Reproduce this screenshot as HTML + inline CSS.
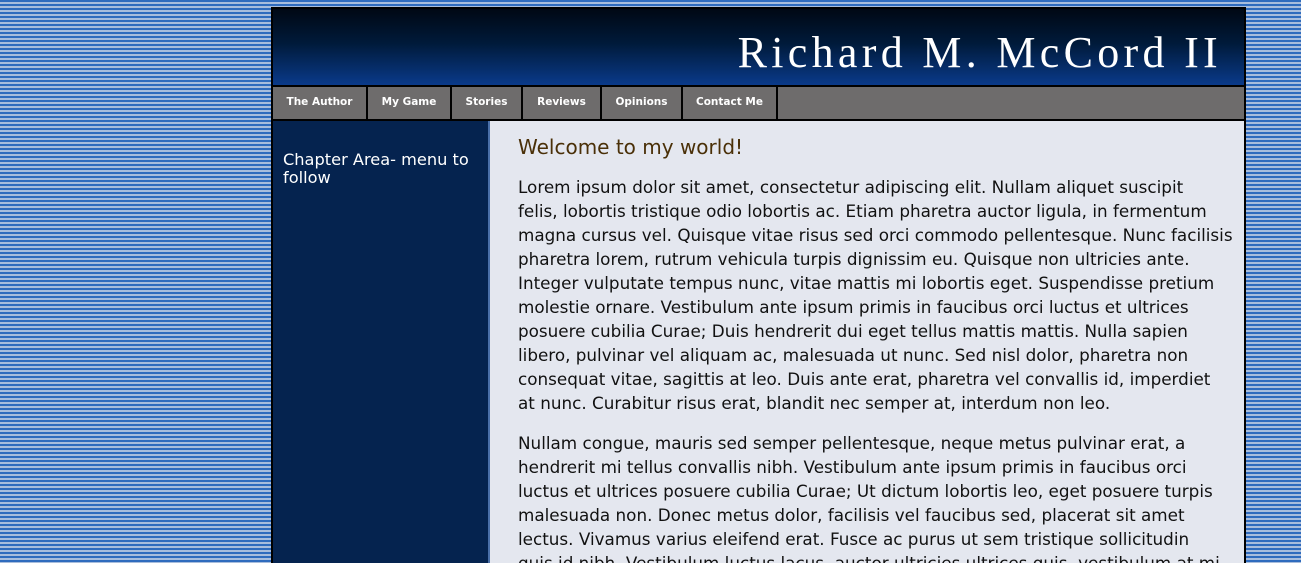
<!DOCTYPE html>
<html><head><style>
html,body{margin:0;padding:0;width:1301px;height:563px;overflow:hidden}
body{background:repeating-linear-gradient(to bottom,#2f6bbd 0,#2f6bbd 2px,#a8bddc 2px,#a8bddc 4px);font-family:"DejaVu Sans","Liberation Sans",sans-serif;position:relative}
#wrap{position:absolute;left:271px;top:7px;width:971px;height:556px;overflow:hidden;border:2px solid #000;border-bottom:none;background:#e4e7ef}
#hdr{height:76px;background:linear-gradient(to bottom,#000814 0%,#001a3a 45%,#0a3a8a 100%);position:relative;border-bottom:2px solid #000}
#hdr h1{margin:0;position:absolute;right:22px;top:18px;font-family:"Liberation Serif","DejaVu Serif",serif;font-weight:normal;color:#fff;font-size:44px;letter-spacing:4.3px;white-space:nowrap}
#nav{height:32px;background:#6e6c6c;border-bottom:2px solid #000;display:flex}
#nav a{display:block;height:32px;line-height:31px;color:#fff;font-weight:bold;font-size:10.5px;text-align:center;border-right:2px solid #000;box-sizing:border-box;text-decoration:none}
#side{position:absolute;left:0;top:112px;width:215px;height:500px;background:#05234f;border-right:2px solid #4a6fa8}
#side p{margin:0;padding:30px 10px;color:#fff;font-size:16.2px;line-height:18px}
#main{position:absolute;left:245px;top:112px;width:720px;color:#111;font-size:16.8px;line-height:24px;white-space:nowrap}
#main h2{margin:14px 0 16px;font-weight:normal;color:#4a3008;font-size:20px}
#main p{margin:0 0 16px}
</style></head><body>
<div id="wrap">
<div id="hdr"><h1>Richard M. McCord II</h1></div>
<div id="nav">
<a style="width:95px">The Author</a><a style="width:84px">My Game</a><a style="width:71px">Stories</a><a style="width:79px">Reviews</a><a style="width:81px">Opinions</a><a style="width:95px">Contact Me</a>
</div>
<div id="side"><p>Chapter Area- menu to follow</p></div>
<div id="main">
<h2>Welcome to my world!</h2>
<p>Lorem ipsum dolor sit amet, consectetur adipiscing elit. Nullam aliquet suscipit<br>felis, lobortis tristique odio lobortis ac. Etiam pharetra auctor ligula, in fermentum<br>magna cursus vel. Quisque vitae risus sed orci commodo pellentesque. Nunc facilisis<br>pharetra lorem, rutrum vehicula turpis dignissim eu. Quisque non ultricies ante.<br>Integer vulputate tempus nunc, vitae mattis mi lobortis eget. Suspendisse pretium<br>molestie ornare. Vestibulum ante ipsum primis in faucibus orci luctus et ultrices<br>posuere cubilia Curae; Duis hendrerit dui eget tellus mattis mattis. Nulla sapien<br>libero, pulvinar vel aliquam ac, malesuada ut nunc. Sed nisl dolor, pharetra non<br>consequat vitae, sagittis at leo. Duis ante erat, pharetra vel convallis id, imperdiet<br>at nunc. Curabitur risus erat, blandit nec semper at, interdum non leo.</p>
<p>Nullam congue, mauris sed semper pellentesque, neque metus pulvinar erat, a<br>hendrerit mi tellus convallis nibh. Vestibulum ante ipsum primis in faucibus orci<br>luctus et ultrices posuere cubilia Curae; Ut dictum lobortis leo, eget posuere turpis<br>malesuada non. Donec metus dolor, facilisis vel faucibus sed, placerat sit amet<br>lectus. Vivamus varius eleifend erat. Fusce ac purus ut sem tristique sollicitudin<br>quis id nibh. Vestibulum luctus lacus, auctor ultricies ultrices quis, vestibulum at mi.</p>
</div>
</div>
</body></html>
